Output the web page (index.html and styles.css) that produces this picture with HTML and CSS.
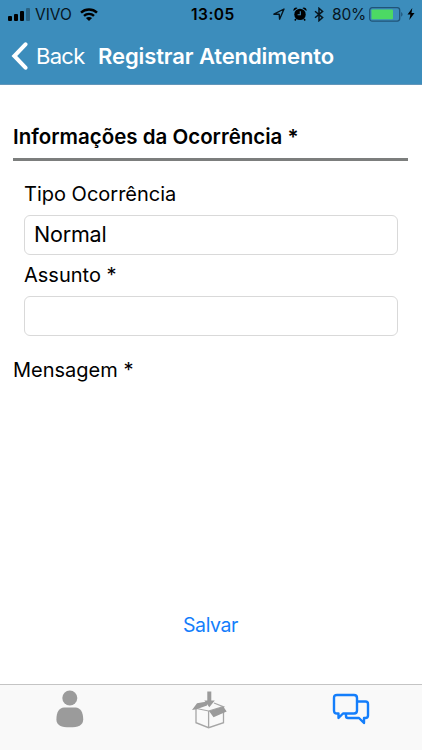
FILE: index.html
```html
<!DOCTYPE html>
<html lang="pt-BR">
<head>
    <meta charset="UTF-8">
    <meta name="viewport" content="width=device-width, initial-scale=1.0">
    <title>Registrar Atendimento</title>
    <link rel="stylesheet" href="styles.css">
</head>
<body>
    <header class="header">
        <div class="status-bar">
            <div class="status-left">
                <svg width="22" height="13" viewBox="0 0 22 13">
                    <rect x="0" y="8" width="4" height="5" rx="1"/>
                    <rect x="6" y="6" width="4" height="7" rx="1"/>
                    <rect x="12" y="3" width="4" height="10" rx="1"/>
                    <rect x="18" y="0" width="4" height="13" rx="1" opacity="0.3"/>
                </svg>
                <span class="carrier">VIVO</span>
                <svg width="18" height="13" viewBox="0 0 18 13">
                    <path d="M1 4.6C5.4 0.4 12.6 0.4 17 4.6M4 7.9c2.8-2.7 7.2-2.7 10 0" fill="none" stroke="#000" stroke-width="2.4"/>
                    <path d="M9 13L5.9 10.1c1.7-1.6 4.5-1.6 6.2 0z"/>
                </svg>
            </div>
            <span class="clock">13:05</span>
            <div class="status-right">
                <svg width="12" height="12" viewBox="0 0 12 12">
                    <path d="M0.9 6.2L11 1 6.6 11.2 6.2 6.2z" fill="none" stroke="#07151e" stroke-width="1.4" stroke-linejoin="round"/>
                </svg>
                <svg class="alarm" width="14" height="14" viewBox="0 0 14 14">
                    <path d="M0.6 3.9A2.6 2.6 0 0 1 4.6 1zM13.4 3.9A2.6 2.6 0 0 0 9.4 1z"/>
                    <circle cx="7" cy="7.4" r="5.7"/>
                    <path d="M3 12l-1.2 1.5M11 12l1.2 1.5" stroke="#000" stroke-width="1.5"/>
                    <path d="M7.3 4.2V7.8H4.6" fill="none" stroke="#3c8dbc" stroke-width="1.1"/>
                </svg>
                <svg class="bluetooth" width="10" height="15" viewBox="0 0 10 15">
                    <path d="M1 4.2L8.6 10.6 5 13.7V1.3L8.6 4.4 1 10.8" fill="none" stroke="#07151e" stroke-width="1.5"/>
                </svg>
                <span class="percent">80%</span>
                <svg width="34" height="15" viewBox="0 0 34 15">
                    <rect x="0.7" y="0.7" width="30" height="13.4" rx="2.5" fill="none" stroke="#205478" stroke-width="1.3"/>
                    <rect x="2.5" y="2.5" width="21.5" height="9.8" rx="0.8" fill="#4cd964"/>
                    <path d="M32.2 5c1.8 0.8 1.8 4 0 4.8z" fill="#205478"/>
                </svg>
                <svg class="bolt" width="8" height="12" viewBox="0 0 8 12">
                    <path d="M5.3 0L0.5 6.6H3.4L2.3 12 7.5 5H4.5z"/>
                </svg>
            </div>
        </div>
        <div class="nav-bar">
            <a class="back" href="#">
                <svg width="18" height="28" viewBox="0 0 18 28">
                    <path d="M14.5 2.3L3.3 14l11.2 11.7" fill="none" stroke="#fff" stroke-width="4" stroke-linecap="round"/>
                </svg>
                <span class="back-label">Back</span>
            </a>
            <h1 class="title">Registrar Atendimento</h1>
        </div>
    </header>

    <main class="content">
        <h2 class="section-title">Informações da Ocorrência *</h2>
        <form class="form">
            <label class="label label-tipo" for="tipo">Tipo Ocorrência</label>
            <input class="field" type="text" id="tipo" value="Normal">
            <label class="label label-assunto" for="assunto">Assunto *</label>
            <input class="field" type="text" id="assunto">
        </form>
        <div class="label message">Mensagem *</div>
        <button class="save" type="button">Salvar</button>
    </main>

    <nav class="tab-bar">
        <a class="tab" href="#">
            <svg width="28" height="39" viewBox="0 0 28 39" fill="#9b9b9b">
                <circle cx="13.8" cy="8" r="7.5"/>
                <path d="M13.8 37.3C5.5 37.3 0.4 35.5 0.4 29.5 0.4 22.5 3.2 17.6 8 17.6h11.6c4.8 0 7.6 4.9 7.6 11.9 0 6-5.100 7.800-13.400 7.800z"/>
            </svg>
        </a>
        <a class="tab tab-box" href="#">
            <svg width="35" height="39" viewBox="0 0 35 39">
                <path d="M4 19V32.7L16.6 37.7 31.5 32.7V17M16.6 21v16.7" fill="none" stroke="#a6a6a6" stroke-width="1.3"/>
                <path d="M4.5 18.5L16.6 21 31.3 16.7 22 13" fill="none" stroke="#a6a6a6" stroke-width="1.2"/>
                <path d="M0 20L5 13.3 15 11.5V15.5L4.5 19.3zM17 21L31.3 16.7 34.7 21.5 21.5 27.3z" fill="#9b9b9b"/>
                <path d="M15.3 1.5h4V10.5h3.5L17.3 17.3 12.3 10.5h3z" fill="#9b9b9b"/>
            </svg>
        </a>
        <a class="tab tab-chat" href="#">
            <svg width="38" height="32" viewBox="0 0 38 32" fill="none" stroke="#147efb" stroke-width="2.4" stroke-linejoin="round">
                <path d="M5 2h17q3 0 3 3V17.5q0 3-3 3H11L6.500 25v-4.500H5Q2 20.500 2 17.500V5Q2 2 5 2z"/>
                <path d="M25 8.500h8.500q2.500 0 2.500 2.500V22.500q0 2.500-2.500 2.500H32v5L27 25H16q-2 0-2-2V20.500"/>
            </svg>
        </a>
    </nav>
</body>
</html>
```
FILE: styles.css
```css
* {
    box-sizing: border-box;
}
body {
    font-family: Inter, "Liberation Sans", sans-serif;
    background-color: #fff;
    color: #000;
    display: flex;
    flex-direction: column;
    height: 100vh;
    margin: 0;
}
svg {
    display: block;
    flex: none;
}
a {
    text-decoration: none;
}
.header {
    height: 85px;
    background-color: #3c8dbc;
    border-bottom: 1px solid #6296ba;
}
.status-bar {
    display: flex;
    align-items: center;
    height: 28px;
    padding: 0 7px 0 8px;
    font-size: 15.5px;
    line-height: 28px;
}
.status-left,
.status-right {
    display: flex;
    align-items: center;
    flex: none;
}
.status-left {
    width: 183px;
}
.carrier {
    width: 50px;
    padding: 1px 0 0 5px;
    color: #07151e;
}
.clock {
    width: 82px;
    padding-top: 1px;
    font-weight: 600;
    letter-spacing: 0.5px;
}
.alarm {
    margin-left: 8px;
}
.bluetooth {
    margin-left: 7px;
}
.percent {
    width: 45px;
    padding: 1px 0 0 8px;
    color: #07151e;
    letter-spacing: -0.2px;
}
.bolt {
    margin-left: 4px;
}
.nav-bar {
    display: flex;
    align-items: center;
    height: 56px;
    padding-left: 11px;
    color: #fff;
}
.back {
    display: flex;
    align-items: center;
    width: 87px;
    color: #fff;
    font-size: 22px;
}
.back-label {
    padding-left: 7px;
    letter-spacing: -0.7px;
}
.title {
    margin: 0;
    font-size: 22px;
    font-weight: 600;
    letter-spacing: -0.1px;
    white-space: nowrap;
}
.content {
    flex: 1;
    display: flex;
    flex-direction: column;
    padding: 37px 14px 0 13px;
}
.section-title {
    height: 39px;
    margin: 0;
    border-bottom: 3px solid #7c7e7d;
    font-size: 20.5px;
    font-weight: 600;
    line-height: 30px;
    white-space: nowrap;
}
.form {
    display: flex;
    flex-direction: column;
    padding: 18px 10px 0 11px;
}
.label {
    font-size: 20px;
    line-height: 31px;
}
.label-tipo {
    height: 36px;
}
.label-assunto {
    height: 41px;
    padding-top: 5px;
}
.field {
    width: 100%;
    height: 40px;
    padding: 0 9px 2px;
    border: 1px solid #d9d9d9;
    border-radius: 6px;
    background: #fff;
    color: #000;
    font-family: inherit;
    font-size: 21.5px;
    letter-spacing: -0.2px;
    outline: none;
}
.message {
    margin-top: 19px;
}
.save {
    align-self: center;
    margin-top: 224px;
    padding: 0;
    border: none;
    background: none;
    color: #147efb;
    font-family: inherit;
    font-size: 19.5px;
    line-height: 30px;
    letter-spacing: -0.4px;
}
.tab-bar {
    display: grid;
    grid-template-columns: repeat(3, 1fr);
    height: 66px;
    padding-top: 5px;
    border-top: 1px solid #c4c4c4;
    background-color: #f9f9f9;
}
.tab {
    display: flex;
    align-items: flex-start;
    justify-content: center;
}
.tab-box {
    padding-right: 3px;
}
.tab-chat {
    padding: 3px 2px 0 0;
}
```
